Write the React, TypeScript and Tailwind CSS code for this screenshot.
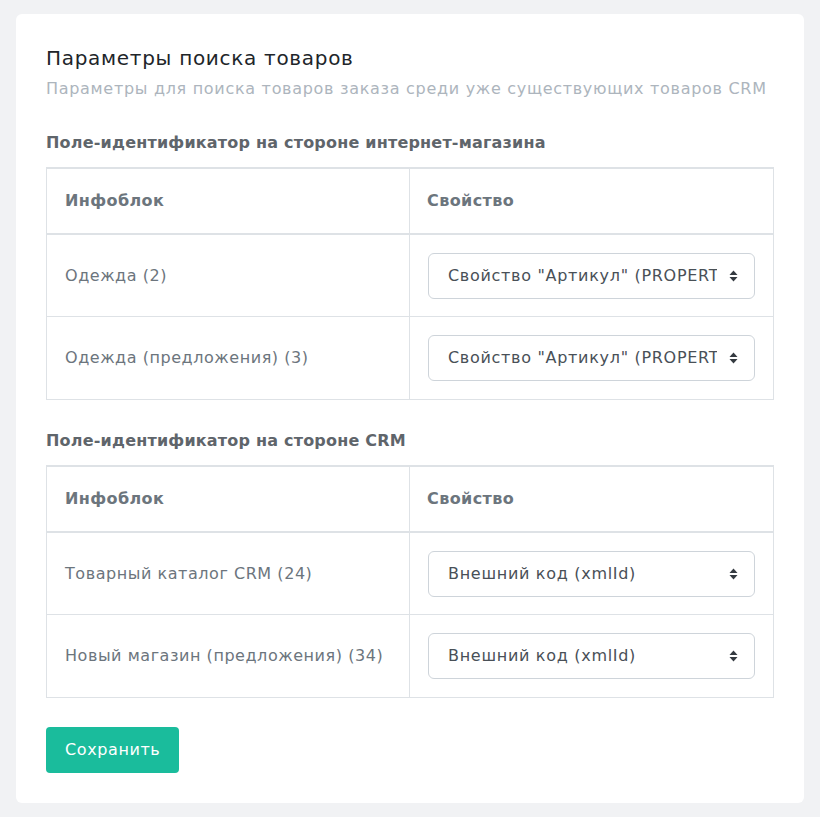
import React from 'react';

const font = { fontFamily: '"DejaVu Sans", "Noto Sans", sans-serif' };

const SortIcon = () => (
  <svg width="9" height="12" viewBox="0 0 9 12" className="shrink-0">
    <path d="M4.5 0.5 L8.5 5 H0.5 Z" fill="#343a40" />
    <path d="M4.5 11.5 L8.5 7 H0.5 Z" fill="#343a40" />
  </svg>
);

const Select = ({ value }: { value: string }) => (
  <div className="flex h-[46px] items-center rounded-md border border-[#ced4da] bg-white pl-[19px] pr-[16px]">
    <span className="flex-1 overflow-hidden whitespace-nowrap text-[16px] tracking-[0.7px] text-[#495057]">{value}</span>
    <span className="ml-3">
      <SortIcon />
    </span>
  </div>
);

type Row = { name: string; value: string };

const MappingTable = ({ rows }: { rows: Row[] }) => (
  <div className="border-x border-b border-t-2 border-[#dee2e6]">
    <div className="grid h-[66px] grid-cols-2 border-b-2 border-[#dee2e6] text-[16px] font-bold tracking-[0.4px] text-[#6c757d]">
      <div className="flex items-center border-r border-[#dee2e6] pl-[18px]">Инфоблок</div>
      <div className="flex items-center pl-[17px]">Свойство</div>
    </div>
    {rows.map((r, i) => (
      <div
        key={i}
        className={`grid h-[82px] grid-cols-2 ${i < rows.length - 1 ? 'border-b border-[#dee2e6]' : ''}`}
      >
        <div className="flex items-center border-r border-[#dee2e6] pl-[18px] text-[16px] tracking-[0.55px] text-[#6c757d]">
          {r.name}
        </div>
        <div className="flex items-center px-[18px]">
          <div className="w-full">
            <Select value={r.value} />
          </div>
        </div>
      </div>
    ))}
  </div>
);

export default function App() {
  return (
    <div className="min-h-[817px] bg-[#f1f2f4] px-4 pt-[14px] pb-[14px]" style={font}>
      <div className="rounded-md bg-white px-[30px] pt-[31px] pb-[30px]">
        <h1 className="text-[20px] leading-[26px] tracking-[0.7px] text-[#212529]">Параметры поиска товаров</h1>
        <p className="mt-[8px] text-[16px] leading-[20px] tracking-[0.7px] text-[#adb5bd]">
          Параметры для поиска товаров заказа среди уже существующих товаров CRM
        </p>

        <h2 className="mt-[33px] mb-[13px] text-[16px] font-bold leading-[22px] tracking-[0.2px] text-[#5f656b]">
          Поле-идентификатор на стороне интернет-магазина
        </h2>
        <MappingTable
          rows={[
            { name: 'Одежда (2)', value: 'Свойство "Артикул" (PROPERTY_ARTNUMBER)' },
            { name: 'Одежда (предложения) (3)', value: 'Свойство "Артикул" (PROPERTY_ARTNUMBER)' },
          ]}
        />

        <h2 className="mt-[30px] mb-[13px] text-[16px] font-bold leading-[22px] tracking-[0.2px] text-[#5f656b]">
          Поле-идентификатор на стороне CRM
        </h2>
        <MappingTable
          rows={[
            { name: 'Товарный каталог CRM (24)', value: 'Внешний код (xmlId)' },
            { name: 'Новый магазин (предложения) (34)', value: 'Внешний код (xmlId)' },
          ]}
        />

        <button className="mt-[29px] h-[46px] rounded bg-[#1abc9c] px-[19px] text-[16px] tracking-[0.6px] text-white">
          Сохранить
        </button>
      </div>
    </div>
  );
}
